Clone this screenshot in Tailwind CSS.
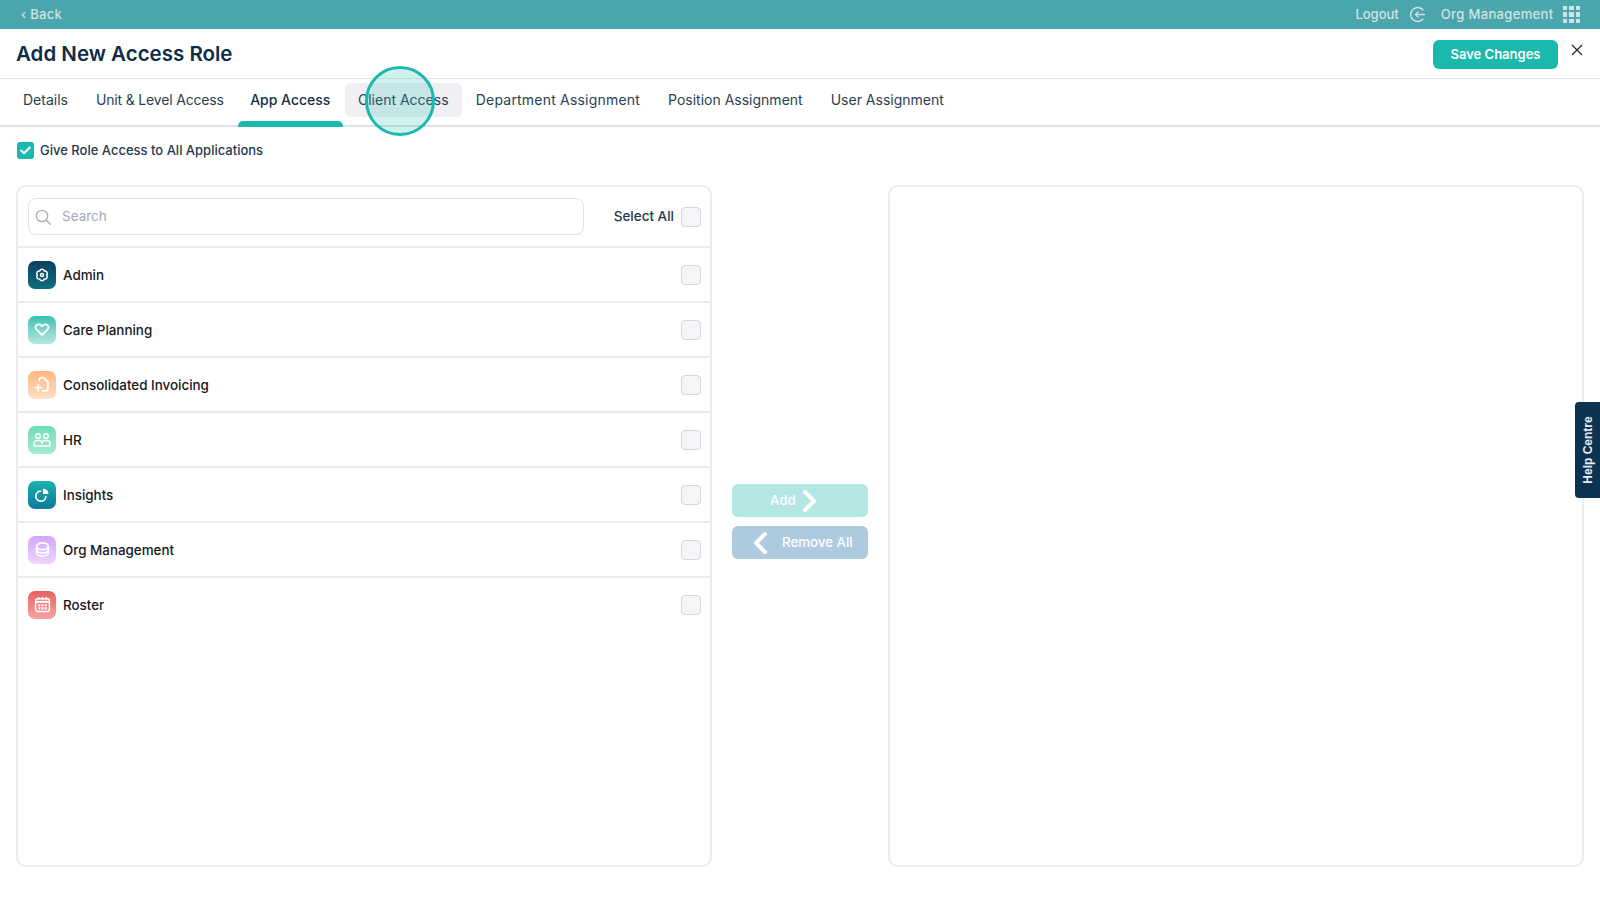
<!DOCTYPE html>
<html lang="en">
<head>
    <meta charset="UTF-8">
    <title>Add New Access Role</title>
    <script src="https://cdn.jsdelivr.net/npm/@tailwindcss/browser@4"></script>
</head>
<body class="bg-white font-['Inter','Liberation_Sans',sans-serif] text-[#12304a] overflow-hidden">
<div class="relative w-[1600px] h-[900px] overflow-hidden">
    <!-- top bar -->
    <div class="h-[29px] bg-[#4aa6ac] flex items-center justify-between pl-[21px] pr-[20px] text-[13px] font-medium text-[#cfe3e4]">
        <div class="tracking-[0.3px]">&lsaquo; Back</div>
        <div class="flex items-center">
            <span>Logout</span>
            <svg class="ml-[10px]" width="17" height="17" viewBox="0 0 17 17" fill="none" stroke="#cfe3e4" stroke-width="1.4" stroke-linecap="round" stroke-linejoin="round"><path d="M14 4a7 7 0 1 0 0 9"/><path d="M15.500 8.500H6.500M9 6 6.500 8.500 9 11"/></svg>
            <span class="ml-[15px] tracking-[0.35px]">Org Management</span>
            <div class="ml-[9px] grid grid-cols-3 gap-[2px]">
                <i class="w-[4.500px] h-[4.500px] bg-[#cfe3e4]"></i><i class="w-[4.500px] h-[4.500px] bg-[#cfe3e4]"></i><i class="w-[4.500px] h-[4.500px] bg-[#cfe3e4]"></i>
                <i class="w-[4.500px] h-[4.500px] bg-[#cfe3e4]"></i><i class="w-[4.500px] h-[4.500px] bg-[#cfe3e4]"></i><i class="w-[4.500px] h-[4.500px] bg-[#cfe3e4]"></i>
                <i class="w-[4.500px] h-[4.500px] bg-[#cfe3e4]"></i><i class="w-[4.500px] h-[4.500px] bg-[#cfe3e4]"></i><i class="w-[4.500px] h-[4.500px] bg-[#cfe3e4]"></i>
            </div>
        </div>
    </div>

    <!-- title row -->
    <div class="h-[50px] border-b border-[#e4e5ec] flex items-center justify-between pl-[16px] pr-[16px] pt-[2px]">
        <h1 class="text-[20.500px] font-semibold text-[#0f2c47]">Add New Access Role</h1>
        <div class="flex items-start">
            <button class="w-[125px] h-[29px] rounded-[6px] bg-[#1ab8ad] text-white text-[13px] font-semibold">Save Changes</button>
            <svg class="ml-[12px] mt-[3px]" width="14" height="14" viewBox="0 0 14 14" fill="none" stroke="#1d2c3a" stroke-width="1.300"><path d="M2 2l10 10M12 2 2 12"/></svg>
        </div>
    </div>

    <!-- tabs -->
    <div class="h-[48px] border-b-2 border-[#e0e1e9] flex text-[14px] text-[#2a3f52] pl-[9px]">
        <div class="h-[34px] mt-[4px] pb-[1px] px-[14px] flex items-center">Details</div>
        <div class="h-[34px] mt-[4px] pb-[1px] px-[14px] flex items-center tracking-[-0.17px]">Unit &amp; Level Access</div>
        <div class="relative h-[34px] mt-[4px] pb-[1px] w-[105px] flex items-center justify-center font-medium text-[#12304a]">
            App Access
            <div class="absolute left-0 right-0 top-[38px] h-[6px] rounded-t-[5px] bg-[#1ab8ad]"></div>
        </div>
        <div class="h-[34px] mt-[4px] pb-[1px] ml-[2px] w-[117px] rounded-[6px] bg-[#f0f0f4] flex items-center justify-center">Client Access</div>
        <div class="h-[34px] mt-[4px] pb-[1px] px-[14px] flex items-center tracking-[0.2px]">Department Assignment</div>
        <div class="h-[34px] mt-[4px] pb-[1px] px-[14px] flex items-center">Position Assignment</div>
        <div class="h-[34px] mt-[4px] pb-[1px] px-[14px] flex items-center">User Assignment</div>
    </div>

    <!-- click marker -->
    <div class="absolute left-[365px] top-[66px] w-[70px] h-[70px] rounded-full border-[3px] border-[#1ab8ad] bg-[#1ab8ad]/20"></div>

    <!-- give access -->
    <div class="h-[58px] flex items-start pt-[14px] pl-[17px] text-[13px] font-medium text-[#24394d]">
        <div class="mt-[1px] w-[17px] h-[17px] rounded-[3px] bg-[#1ab8ad] flex items-center justify-center">
            <svg width="11" height="9" viewBox="0 0 11 9" fill="none" stroke="white" stroke-width="2" stroke-linecap="round" stroke-linejoin="round"><path d="M1.200 4.500 4 7.300 9.800 1.500"/></svg>
        </div>
        <span class="ml-[6px]">Give Role Access to All Applications</span>
    </div>

    <!-- panels -->
    <div class="flex pl-[16px] pr-[16px]">
        <div class="w-[696px] h-[682px] rounded-[10px] border-2 border-[#ebecf1]">
            <div class="h-[61px] border-b-2 border-[#ebecf1] flex items-center pl-[10px] pr-[9px]">
                <div class="w-[556px] h-[37px] rounded-[8px] border border-[#e2e3e9] flex items-center pl-[5px]">
                    <svg width="18" height="18" viewBox="0 0 18 18" fill="none" stroke="#a9adb5" stroke-width="1.300" stroke-linecap="round"><circle cx="8" cy="8" r="5.700"/><path d="m12.300 12.300 4 4"/></svg>
                    <span class="ml-[10px] text-[13.500px] text-[#a3a8b6]">Search</span>
                </div>
                <span class="ml-auto text-[13.500px] font-medium text-[#1f3850]">Select All</span>
                <div class="ml-[7px] w-[20px] h-[20px] rounded-[4px] border border-[#d5d7dd] bg-[#f4f5f7]"></div>
            </div>
            <div class="h-[55px] border-b-2 border-[#ebecf1] flex items-center pl-[10px] pr-[9px]">
                <div class="w-[28px] h-[28px] rounded-[7px] bg-gradient-to-b from-[#0c3f5e] to-[#0f6f80] flex items-center justify-center">
                    <svg width="16" height="16" viewBox="0 0 16 16" fill="none" stroke="white" stroke-width="1.500" stroke-linejoin="round"><path d="M12.600 8A2.400 2.400 0 0 0 10.300 4 2.400 2.400 0 0 0 5.700 4 2.400 2.400 0 0 0 3.400 8 2.400 2.400 0 0 0 5.700 12 2.400 2.400 0 0 0 10.300 12 2.400 2.400 0 0 0 12.600 8z"/><circle cx="8" cy="8" r="1.500"/></svg>
                </div>
                <span class="ml-[7px] pt-[2px] text-[13.400px] font-medium text-[#15171c]">Admin</span>
                <div class="ml-auto w-[20px] h-[20px] rounded-[4px] border border-[#d5d7dd] bg-[#f4f5f7]"></div>
            </div>
            <div class="h-[55px] border-b-2 border-[#ebecf1] flex items-center pl-[10px] pr-[9px]">
                <div class="w-[28px] h-[28px] rounded-[7px] bg-gradient-to-b from-[#2fc1b6] to-[#b5e6e1] flex items-center justify-center">
                    <svg width="16" height="15" viewBox="0 0 16 15" fill="none" stroke="white" stroke-width="1.800" stroke-linejoin="round"><path d="M8 13 2.500 7.500a3.200 3.200 0 0 1 0-4.300 3 3 0 0 1 4.300 0L8 4.400l1.200-1.200a3 3 0 0 1 4.300 0 3.200 3.200 0 0 1 0 4.300z"/></svg>
                </div>
                <span class="ml-[7px] pt-[2px] text-[13.400px] font-medium text-[#15171c]">Care Planning</span>
                <div class="ml-auto w-[20px] h-[20px] rounded-[4px] border border-[#d5d7dd] bg-[#f4f5f7]"></div>
            </div>
            <div class="h-[55px] border-b-2 border-[#ebecf1] flex items-center pl-[10px] pr-[9px]">
                <div class="w-[28px] h-[28px] rounded-[7px] bg-gradient-to-b from-[#fdb67e] to-[#fde0c6] flex items-center justify-center">
                    <svg width="17" height="17" viewBox="0 0 16 16" fill="none" stroke="white" stroke-width="1.700" stroke-linecap="round" stroke-linejoin="round"><path d="M5 4V3a1.500 1.500 0 0 1 1.500-1.500H9l4 4v7A1.500 1.500 0 0 1 11.500 14H8"/><path d="M1.500 11h5M4 8.500v5"/></svg>
                </div>
                <span class="ml-[7px] pt-[2px] text-[13.400px] font-medium text-[#15171c]">Consolidated Invoicing</span>
                <div class="ml-auto w-[20px] h-[20px] rounded-[4px] border border-[#d5d7dd] bg-[#f4f5f7]"></div>
            </div>
            <div class="h-[55px] border-b-2 border-[#ebecf1] flex items-center pl-[10px] pr-[9px]">
                <div class="w-[28px] h-[28px] rounded-[7px] bg-gradient-to-b from-[#6fdcba] to-[#a5ead4] flex items-center justify-center">
                    <svg width="18" height="16" viewBox="0 0 18 16" fill="none" stroke="white" stroke-width="1.400" stroke-linejoin="round"><circle cx="5" cy="4" r="2.300"/><circle cx="13" cy="4" r="2.300"/><path d="M1 14v-2.500A3 3 0 0 1 4 8.500h2a3 3 0 0 1 3 3 3 3 0 0 1 3-3h2a3 3 0 0 1 3 3V14z"/></svg>
                </div>
                <span class="ml-[7px] pt-[2px] text-[13.400px] font-medium text-[#15171c]">HR</span>
                <div class="ml-auto w-[20px] h-[20px] rounded-[4px] border border-[#d5d7dd] bg-[#f4f5f7]"></div>
            </div>
            <div class="h-[55px] border-b-2 border-[#ebecf1] flex items-center pl-[10px] pr-[9px]">
                <div class="w-[28px] h-[28px] rounded-[7px] bg-gradient-to-b from-[#1ab3ad] to-[#0f7a9c] flex items-center justify-center">
                    <svg width="16" height="16" viewBox="0 0 16 16" fill="none" stroke="white" stroke-width="1.700" stroke-linecap="round"><path d="M6.500 4.200a5 5 0 1 0 5.300 5.300"/><path d="M9 1.500A5.500 5.500 0 0 1 14.500 7H9z" fill="white" stroke="none"/></svg>
                </div>
                <span class="ml-[7px] pt-[2px] text-[13.400px] font-medium text-[#15171c]">Insights</span>
                <div class="ml-auto w-[20px] h-[20px] rounded-[4px] border border-[#d5d7dd] bg-[#f4f5f7]"></div>
            </div>
            <div class="h-[55px] border-b-2 border-[#ebecf1] flex items-center pl-[10px] pr-[9px]">
                <div class="w-[28px] h-[28px] rounded-[7px] bg-gradient-to-b from-[#d3a5fb] to-[#ecd6fd] flex items-center justify-center">
                    <svg width="17" height="17" viewBox="0 0 16 16" fill="none" stroke="white" stroke-width="1.600" stroke-linejoin="round" stroke-linecap="round"><path d="M8 1.800c3 0 5.500 1.400 5.500 3.200S11 8.200 8 8.200 2.500 6.800 2.500 5 5 1.800 8 1.800z"/><path d="M2.500 5v6c0 1.800 2.500 3.200 5.500 3.200s5.500-1.400 5.500-3.200V5"/><path d="M2.500 8.200c0 1.800 2.500 3 5.500 3s5.500-1.200 5.500-3"/></svg>
                </div>
                <span class="ml-[7px] pt-[2px] text-[13.400px] font-medium text-[#15171c]">Org Management</span>
                <div class="ml-auto w-[20px] h-[20px] rounded-[4px] border border-[#d5d7dd] bg-[#f4f5f7]"></div>
            </div>
            <div class="h-[55px] border-b-2 border-transparent flex items-center pl-[10px] pr-[9px]">
                <div class="w-[28px] h-[28px] rounded-[7px] bg-gradient-to-b from-[#e95f5f] to-[#f3a3a3] flex items-center justify-center">
                    <svg width="17" height="17" viewBox="0 0 16 16"><rect x="1.500" y="2.500" width="13" height="12" rx="2" fill="none" stroke="white" stroke-width="1.400"/><path d="M1.500 5.500h13" stroke="white" stroke-width="2"/><path d="M4.500 1v2.500M8 1v2.500M11.500 1v2.500" stroke="white" stroke-width="1.200"/><path d="M4 7.700h2v2H4zM7 7.700h2v2H7zM10 7.700h2v2h-2zM4 10.700h2v2H4zM7 10.700h2v2h-2z M10 10.700h2v2h-2z" fill="white"/></svg>
                </div>
                <span class="ml-[7px] pt-[1px] text-[13.400px] font-medium text-[#15171c]">Roster</span>
                <div class="ml-auto w-[20px] h-[20px] rounded-[4px] border border-[#d5d7dd] bg-[#f4f5f7]"></div>
            </div>
        </div>

        <div class="w-[176px] flex flex-col items-start pl-[20px] gap-[9px] pt-[299px]">
            <button class="w-[136px] h-[33px] rounded-[6px] bg-[#b2e7e3] text-white text-[13px] font-medium flex items-center justify-center pr-[12px] tracking-[0.2px]">
                Add
                <svg class="ml-[6px]" width="16" height="24" viewBox="0 0 16 24" fill="none" stroke="white" stroke-width="4" stroke-linecap="round" stroke-linejoin="round"><path d="M3 3 12 12 3 21"/></svg>
            </button>
            <button class="w-[136px] h-[33px] rounded-[6px] bg-[#aecadf] text-white text-[13.300px] font-medium flex items-center pl-[20px]">
                <svg width="16" height="24" viewBox="0 0 16 24" fill="none" stroke="white" stroke-width="4" stroke-linecap="round" stroke-linejoin="round"><path d="M13 3 4 12 13 21"/></svg>
                <span class="ml-[14px]">Remove All</span>
            </button>
        </div>

        <div class="w-[696px] h-[682px] rounded-[10px] border-2 border-[#ebecf1]"></div>
    </div>

    <!-- help tab -->
    <div class="absolute right-0 top-[402px] w-[25px] h-[96px] rounded-l-[4px] bg-[#0c3350] flex items-center justify-center">
        <span class="-rotate-90 whitespace-nowrap text-[12px] font-semibold text-[#e6edf2] font-['Liberation_Sans',sans-serif]">Help Centre</span>
    </div>
</div>
</body>
</html>
